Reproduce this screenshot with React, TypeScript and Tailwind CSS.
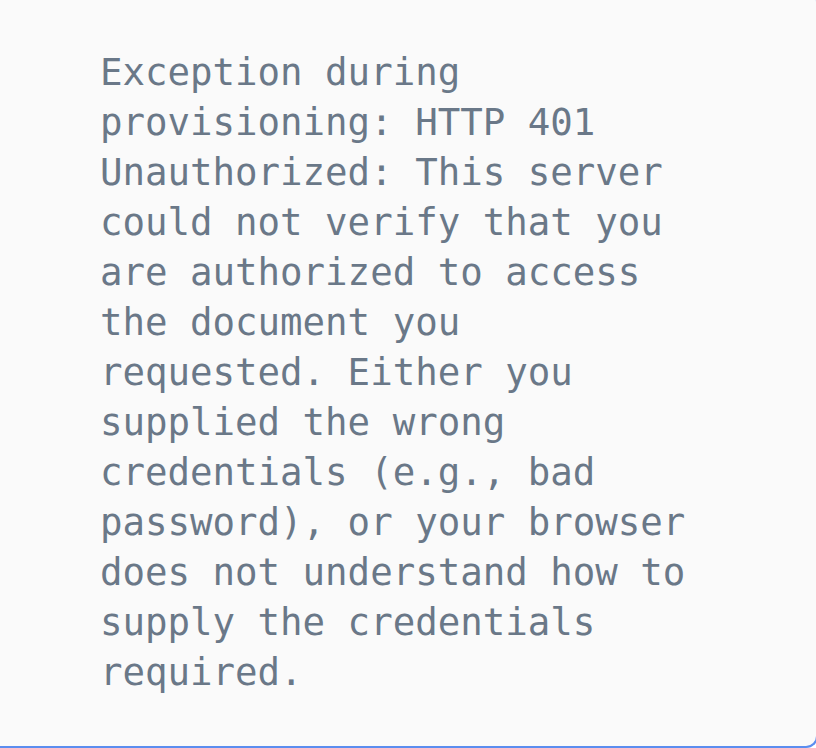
export default function App() {
  return (
    <div className="relative h-[748px] w-[816px] overflow-hidden bg-white">
      <div className="absolute left-[-20px] top-[-10px] h-[758px] w-[838px] rounded-br-[12px] rounded-tr-[12px] border-b-2 border-r-2 border-[#5b8def] bg-[#fafafa]" />
      <div className="relative pl-[100px] pt-[47px]">
        <p className="w-[596px] font-['DejaVu_Sans_Mono',monospace] text-[37.4px] leading-[50px] text-[#6a7888]">
          Exception during provisioning: HTTP 401 Unauthorized: This server could not verify that you are authorized to access the document you requested. Either you supplied the wrong credentials (e.g., bad password), or your browser does not understand how to supply the credentials required.
        </p>
      </div>
    </div>
  );
}
